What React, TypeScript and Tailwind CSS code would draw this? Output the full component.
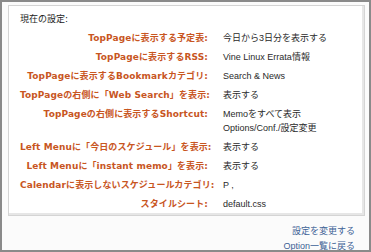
import React from 'react';

const rows: { label: string; value: string[] }[] = [
    { label: 'TopPageに表示する予定表:', value: ['今日から3日分を表示する'] },
    { label: 'TopPageに表示するRSS:', value: ['Vine Linux Errata情報'] },
    { label: 'TopPageに表示するBookmarkカテゴリ:', value: ['Search & News'] },
    { label: 'TopPageの右側に「Web Search」を表示:', value: ['表示する'] },
    { label: 'TopPageの右側に表示するShortcut:', value: ['Memoをすべて表示', 'Options/Conf./設定変更'] },
    { label: 'Left Menuに「今日のスケジュール」を表示:', value: ['表示する'] },
    { label: 'Left Menuに「instant memo」を表示:', value: ['表示する'] },
    { label: 'Calendarに表示しないスケジュールカテゴリ:', value: ['P ,'] },
    { label: 'スタイルシート:', value: ['default.css'] },
];

export default function App() {
    return (
        <div
            className="w-[371px] h-[252px] border-2 border-[#8a8a8a] bg-[#fbfbfb] pt-[3px] pl-[6px] pr-[4px] overflow-hidden"
            style={{ fontFamily: '"DejaVu Sans", "Noto Sans CJK JP", sans-serif' }}
        >
            <div className="w-[357px] h-[211px] border border-[#d4d4d4] bg-white shadow-[inset_-2px_-2px_0_#e6e6e6] pl-[11px] pt-[6px]">
                <div className="text-[9px] leading-[14px] text-[#222]">現在の設定:</div>
                <div className="mt-[5px] grid grid-cols-[188px_1fr] gap-x-[15px] gap-y-[5px]">
                    {rows.map((r) => (
                        <React.Fragment key={r.label}>
                            <div className="text-right whitespace-nowrap text-[9px] leading-[14px] font-bold tracking-[0.1px] text-[#c8561f]">
                                {r.label}
                            </div>
                            <div
                                className="whitespace-nowrap text-[9px] leading-[14px] text-[#2a2a2a]"
                                style={{ fontFamily: '"Liberation Sans", "Noto Sans CJK JP", sans-serif' }}
                            >
                                {r.value.map((v) => (
                                    <div key={v}>{v}</div>
                                ))}
                            </div>
                        </React.Fragment>
                    ))}
                </div>
            </div>
            <div
                className="flex flex-col items-end pr-[10px] pt-[8px] text-[9px] leading-[15px] text-[#3d6296]"
                style={{ fontFamily: '"Liberation Sans", "Noto Sans CJK JP", sans-serif' }}
            >
                <span>設定を変更する</span>
                <span>Option一覧に戻る</span>
            </div>
        </div>
    );
}
